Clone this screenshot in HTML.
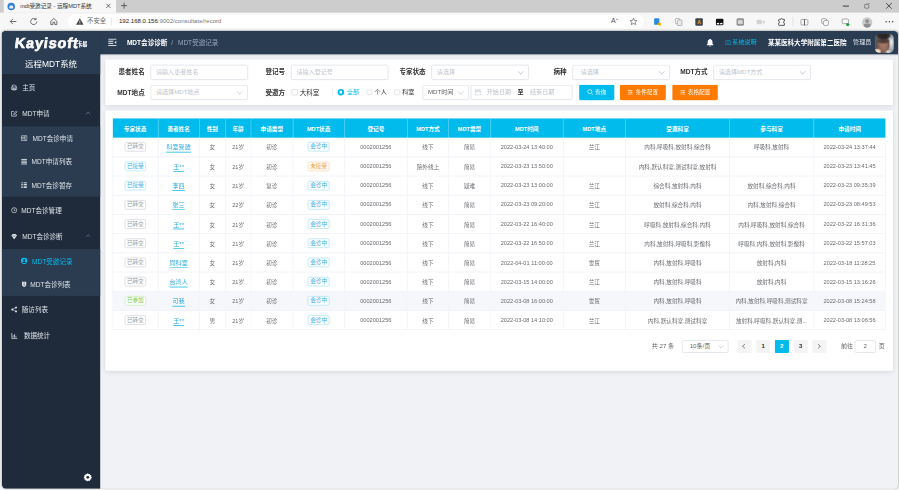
<!DOCTYPE html>
<html lang="zh-CN"><head><meta charset="utf-8"><title>mdt受邀记录 - 远程MDT系统</title>
<style>
*{box-sizing:border-box;margin:0;padding:0}
html,body{width:899px;height:490px;overflow:hidden;background:#f7f7f7}
body{font-family:"Liberation Sans","Noto Sans CJK SC",sans-serif;color:#303133}
#root{position:absolute;left:0;top:0;width:1920px;height:1047px;transform:scale(0.46823) translateZ(0);transform-origin:0 0;overflow:hidden}
.abs{position:absolute}
/* browser chrome */
#tabbar{position:absolute;left:0;top:0;width:1920px;height:27px;background:#cdcdcd;z-index:2}
#tab{position:absolute;left:8px;top:-8px;width:240px;height:35px;background:#f7f7f7;border-radius:8px 8px 0 0}
#tab .fav{position:absolute;left:8px;top:14px;width:16px;height:16px;border-radius:50%;background:#2f7fd6}
#tab .fav i{position:absolute;left:4px;top:5px;width:8px;height:7px;border-radius:4px 4px 1px 1px;background:#e8f1fb}
#tab .ttl{position:absolute;left:35px;top:13px;font-size:12px;color:#333;white-space:nowrap;line-height:18px}
#tab .x{position:absolute;left:216px;top:11px;font-size:18px;line-height:20px;color:#333}
#plus{position:absolute;left:257px;top:1px;font-size:21px;line-height:22px;color:#333}
.wc{position:absolute;top:0;font-size:16px;color:#222;line-height:22px}
#toolbar{position:absolute;left:0;top:26px;width:1920px;height:40px;background:#f7f7f7}
#pill{position:absolute;left:145px;top:5px;width:1230px;height:30px;border-radius:15px;background:#fff}
#pill .t{position:absolute;top:6px;font-size:13px;line-height:18px;white-space:nowrap}
.ti{position:absolute;top:11px;width:18px;height:18px}
/* page */
#page{position:absolute;left:4px;top:66px;width:1913.500px;height:978px;background:#f0f2f5;border-radius:9px;overflow:hidden;box-shadow:0 0 4px rgba(0,0,0,.22)}
#side{position:absolute;left:0;top:0;width:210px;height:978px;background:#1f2b3b}
#logo{position:absolute;left:0;top:0;width:210px;height:92px;background:#2a3c52}
#logo .k{position:absolute;left:23.500px;top:4px;font-size:31px;font-weight:bold;color:#fff;letter-spacing:1.8px;line-height:44px;-webkit-text-stroke:1.3px #fff;white-space:nowrap;transform:skewX(-7deg);transform-origin:0 100%}
#logo .k small{font-size:11px;letter-spacing:-0.5px;-webkit-text-stroke:0.5px #fff;margin-left:-3px;position:relative;top:-3.500px;display:inline-block;transform:skewX(7deg)}
#logo .s{position:absolute;left:0;top:58px;width:210px;text-align:center;font-size:18px;color:#fff;line-height:26px}
.mi{position:absolute;left:0;width:210px;height:56px;line-height:56px;font-size:14px;color:#dde2e9;white-space:nowrap}
.mi .tx{position:absolute;left:43.500px;top:0.500px}
.mi svg{position:absolute;left:19px;top:22px;width:14.500px;height:14px}
.mi .ar{position:absolute;left:181px;top:26px;width:6.500px;height:6.500px;border-left:1.4px solid #74839a;border-top:1.4px solid #74839a;transform:rotate(45deg)}
.sub{position:absolute;left:0;width:210px;background:#2b3c50}
.si{position:absolute;left:0;width:210px;height:50px;line-height:50px;font-size:14px;color:#dde2e9;white-space:nowrap}
.si .tx{position:absolute;left:65.500px;top:1px}
.si svg{position:absolute;left:40px;top:18px;width:15px;height:14px}
.si.act{color:#00bcec}
#hdr{position:absolute;left:0;top:0;width:1914px;height:50px;background:#2a3c52;color:#fff;box-shadow:0 1px 5px rgba(0,21,41,.18)}
#hdr .bc{position:absolute;top:0;line-height:50px;font-size:14px;white-space:nowrap}
/* panels */
.panel{position:absolute;background:#fff;border-radius:2px;box-shadow:0 2px 12px 0 rgba(0,0,0,.1)}
#fpanel{left:221px;top:60.500px;width:1682px;height:97.500px}
.lb{position:absolute;font-size:14px;font-weight:bold;color:#303133;line-height:32px;text-align:right;width:80px;white-space:nowrap}
.ip{position:absolute;height:32.500px;border:2px solid #e2e5eb;border-radius:4px;background:#fff;font-size:13px;color:#c0c4cc;line-height:28px;padding-left:10px;white-space:nowrap}
.ip .dn{position:absolute;right:12px;top:7.500px;width:8.500px;height:8.500px;border-right:1.400px solid #b9bdc6;border-bottom:1.400px solid #b9bdc6;transform:rotate(45deg)}
.btn{position:absolute;height:32.500px;border-radius:3px;color:#fff;font-size:12px;line-height:32px;text-align:center;white-space:nowrap}
.cy{background:#00bbee}
.or{background:#ff7a00}
.rd{position:absolute;width:14px;height:14px;border:2px solid #dfe2e8;border-radius:50%;background:#fff}
.rd.on{border:4.500px solid #00bbee}
.rl{position:absolute;font-size:13px;line-height:32px;color:#303133;white-space:nowrap}
.tpanel{left:221px;top:170px;width:1682px;height:556px}
.tb{position:absolute;left:14.500px;top:17px;border-collapse:collapse;table-layout:fixed;width:1651px;font-size:12px;color:#696b70}
.tb th{height:40.500px;background:#00bbec;color:#fff;font-weight:bold;font-size:12px;text-align:center;border-right:2px solid #43cdf1;border-bottom:0;white-space:nowrap}
.tb th:last-child{border-right:none}
.tb td{height:41.100px;text-align:center;border-right:2px solid #f3f5f9;border-bottom:2px solid #f1f3f8;white-space:nowrap;overflow:hidden}
.tb td:first-child{border-left:2px solid #f3f5f9}
.tb tr.hov td{background:#f5f7fa}
.tag{display:inline-block;height:21px;line-height:17px;padding:0 3px;border:2px solid #dddee2;border-radius:4px;font-size:12px;color:#9a9ca1;background:#fff}

.tag.kb{border-color:#c0e8f9;color:#35aee8;background:#fdfeff}
.tag.ko{border-color:#fbe2c6;color:#f09a40;background:#fffdfa}
.tag.kn{border-color:#d3eec5;color:#78c850;background:#fdfffc}
.lnk{color:#2ba9e0;border-bottom:2px solid #3cc6ea;padding-bottom:1.500px;font-size:13px}
/* pager */
.pg{position:absolute;top:490px;height:28px;line-height:28px;font-size:13px;color:#606266;white-space:nowrap;text-align:center}
.pb{background:#f4f4f5;border-radius:2px;font-weight:bold;color:#303133;width:30px}
.pb.on{background:#00bbec;color:#fff}

</style></head>
<body>
<div id="root">
<!-- browser chrome -->
<div id="tabbar">
  <div id="tab"><span class="fav"><i></i></span><span class="ttl">mdt受邀记录 - 远程MDT系统</span><svg class="abs" style="left:218px;top:15px;width:11px;height:11px" viewBox="0 0 11 11"><path d="M1 1l9 9M10 1l-9 9" stroke="#333" stroke-width="1.500" fill="none"/></svg></div>
  <svg class="abs" style="left:258px;top:5px;width:14px;height:14px" viewBox="0 0 14 14"><path d="M7 0.500v13M0.500 7h13" stroke="#333" stroke-width="1.500" fill="none"/></svg>
  <span class="abs" style="left:1800px;top:12px;width:13px;height:1.500px;background:#333"></span>
  <span class="abs" style="left:1846px;top:8.500px;width:9.500px;height:9.500px;border:1.500px solid #333;border-radius:2px"></span><span class="abs" style="left:1849px;top:6px;width:9.500px;height:9.500px;border-top:1.500px solid #333;border-right:1.500px solid #333;border-radius:0 3px 0 0"></span>
  <svg class="abs" style="left:1891px;top:5px;width:15px;height:15px" viewBox="0 0 15 15"><path d="M1.500 1.500l12 12M13.500 1.500l-12 12" stroke="#222" stroke-width="1.600" fill="none"/></svg>
</div>
<div id="toolbar">
  <svg class="ti" style="left:19px" viewBox="0 0 18 18"><path d="M16 9H3M8.5 3.5L3 9l5.5 5.5" fill="none" stroke="#444" stroke-width="1.6"/></svg>
  <svg class="ti" style="left:63px" viewBox="0 0 18 18"><path d="M15.5 9a6.5 6.5 0 1 1-2.2-4.9M14 1v4h-4" fill="none" stroke="#444" stroke-width="1.6"/></svg>
  <svg class="ti" style="left:106px" viewBox="0 0 18 18"><path d="M2.5 8.5L9 2.5l6.5 6v7h-4.5v-5h-4v5H2.5z" fill="none" stroke="#444" stroke-width="1.6"/></svg>
  <div id="pill">
    <svg class="abs" style="left:16.500px;top:7px;width:17px;height:16px" viewBox="0 0 17 16"><path d="M8.5 1L16.5 15H0.5z" fill="#444"/><path d="M8.5 6v4.5M8.5 12v1.6" stroke="#fff" stroke-width="1.6"/></svg>
    <span class="t" style="left:41px;color:#666;font-size:13.500px">不安全</span>
    <span class="abs" style="left:92px;top:7px;width:1px;height:16px;background:#c8c8c8"></span>
    <span class="t" style="left:109px;color:#222">192.168.0.156<span style="color:#777">:9002/consultate/record</span></span>
    <span class="t" style="left:1160px;color:#555;font-size:15px;top:5px">A<span style="font-size:9px;vertical-align:top;line-height:12px">»</span></span>
    <svg class="abs" style="left:1199px;top:6px;width:18px;height:18px" viewBox="0 0 18 18"><path d="M9 1.8l2.2 4.7 5 .6-3.7 3.5 1 5L9 13.1l-4.5 2.5 1-5L1.800 7.1l5-.6z" fill="none" stroke="#555" stroke-width="1.4" stroke-linejoin="round"/></svg>
  </div>
  <!-- extension icons -->
  <span class="abs" style="left:1397px;top:13px;width:10.500px;height:14px;background:#2d8ae0;border-radius:2px"></span><span class="abs" style="left:1405px;top:21.500px;width:7px;height:7px;background:#f2b200;border-radius:50%"></span>
  <span class="abs" style="left:1442px;top:12.500px;width:10px;height:12px;border:1.6px solid #777;border-radius:2px"></span><span class="abs" style="left:1446px;top:16px;width:10.500px;height:12.500px;border:1.6px solid #777;border-radius:2px;background:#e9e9e9"></span>
  <span class="abs" style="left:1485px;top:12.500px;width:16px;height:16px;background:#3c4150;border-radius:2px;color:#e8b800;font-size:11px;font-weight:bold;line-height:16px;text-align:center">A</span>
  <span class="abs" style="left:1529px;top:14px;width:16px;height:13.500px;background:#111;border-radius:2px"></span><span class="abs" style="left:1531px;top:22.500px;width:5px;height:3px;background:#fff"></span><span class="abs" style="left:1538px;top:22.500px;width:5px;height:3px;background:#fff"></span>
  <span class="abs" style="left:1573px;top:13px;width:16px;height:15.500px;background:#939393;border-radius:3px"></span><span class="abs" style="left:1576px;top:16.500px;width:10px;height:8.500px;background:#d8d8d8"></span>
  <span class="abs" style="left:1616px;top:16px;width:11px;height:10px;background:#d2d2d2;border-radius:2px"></span><span class="abs" style="left:1627px;top:17px;width:0;height:0;border-right:6px solid #d2d2d2;border-top:4px solid transparent;border-bottom:4px solid transparent"></span>
  <svg class="ti" style="left:1660px;top:11.500px;width:19px;height:19px" viewBox="0 0 20 20"><path d="M8 3.500c0-2.400 4-2.400 4 0h4v4.200c-2.600 0-2.600 4.600 0 4.600V17H4.500C3.700 17 3 16.300 3 15.500V12c2.800 0 2.800-4.500 0-4.500V5c0-.8.700-1.500 1.500-1.500z" fill="none" stroke="#444" stroke-width="2" stroke-linejoin="round"/></svg>
  <span class="abs" style="left:1693px;top:10px;width:1px;height:20px;background:#cfcfcf"></span>
  <span class="abs" style="left:1710px;top:14.500px;width:16px;height:13px;border:1.5px solid #555;border-radius:3px"></span><span class="abs" style="left:1717.200px;top:14.500px;width:1.500px;height:13px;background:#555"></span>
  <span class="abs" style="left:1754px;top:12.500px;width:12px;height:12px;border:1.5px solid #555;border-radius:4px"></span><span class="abs" style="left:1758px;top:16.500px;width:12px;height:12px;border:1.5px solid #555;border-radius:4px;background:#f7f7f7"></span>
  <span class="abs" style="left:1798px;top:14px;width:15px;height:11px;border:1.5px solid #555;border-radius:3px"></span><span class="abs" style="left:1807px;top:23px;width:7px;height:7px;background:#21a038;border-radius:50%"></span>
  <span class="abs" style="left:1840.500px;top:10.500px;width:22.500px;height:22.500px;background:#cacaca;border-radius:50%;overflow:hidden"><i class="abs" style="left:7.500px;top:4.500px;width:7.500px;height:7.500px;border-radius:50%;background:#8e8e8e"></i><i class="abs" style="left:3.500px;top:13.500px;width:15.500px;height:13px;border-radius:7px 7px 0 0;background:#8e8e8e"></i></span>
  <span class="abs" style="left:1891px;top:19px;width:3.200px;height:3.200px;border-radius:50%;background:#444"></span><span class="abs" style="left:1898px;top:19px;width:3.200px;height:3.200px;border-radius:50%;background:#444"></span><span class="abs" style="left:1905px;top:19px;width:3.200px;height:3.200px;border-radius:50%;background:#444"></span>
</div>
<!-- page -->
<div id="page">
<div id="hdr"><div class="abs" style="left:210px;top:0;width:1702px;height:50px">
  <svg class="abs" style="left:17px;top:16px;width:18px;height:17px" viewBox="0 0 18 17"><path d="M0 1.500h18M0 6h11M0 10.500h11M0 15.500h18" stroke="#fff" stroke-width="2" fill="none"/><path d="M17.500 5v7l-3.800-3.500z" fill="#fff"/></svg>
  <span class="bc" style="left:57px;font-weight:bold;color:#fff">MDT会诊诊断</span>
  <span class="bc" style="left:152px;color:#97a8be">/</span>
  <span class="bc" style="left:166px;color:#97a8be">MDT受邀记录</span>
  <svg class="abs" style="left:1294px;top:16px;width:17px;height:17.500px" viewBox="0 0 15 16"><path d="M7.500 0.500c.8 0 1.200.6 1.200 1.300C11 2.500 12.200 4.500 12.200 7v3.500l1.800 2v.8H1v-.8l1.800-2V7c0-2.500 1.200-4.500 3.500-5.200 0-.7.400-1.300 1.200-1.300zM5.800 14.200h3.400a1.700 1.700 0 0 1-3.400 0z" fill="#fff"/></svg>
  <svg class="abs" style="left:1335px;top:19.500px;width:11.500px;height:10.500px" viewBox="0 0 14 12" preserveAspectRatio="none"><path d="M.700.700h12.600v10.600H.700zM7 .700v10.600" fill="none" stroke="#00bcec" stroke-width="1.300"/></svg>
  <span class="bc" style="left:1350px;color:#00bcec;font-size:13px">系统说明</span>
  <span class="bc" style="left:1426px;font-weight:bold;color:#fff">某某医科大学附属第二医院</span>
  <span class="bc" style="left:1608px;font-size:13px;color:#dfe6ee">管理员</span>
  <span class="abs" style="left:1654px;top:6px;width:41px;height:40.500px;border-radius:10px;overflow:hidden;background:radial-gradient(ellipse 9px 7px at 6px 38px,#efe9e2 0%,#e3c9a8 60%,rgba(220,160,90,0) 100%),radial-gradient(ellipse 8px 6px at 29px 39px,#e6e6e6 0%,rgba(230,230,230,0) 100%),radial-gradient(ellipse 15px 7px at 19px 15.500px,rgba(45,34,38,.8) 0%,rgba(45,34,38,.55) 60%,rgba(45,34,38,0) 100%),radial-gradient(ellipse 17px 11px at 19px 3px,#282324 0%,#2e2828 65%,rgba(46,40,40,0) 100%),radial-gradient(ellipse 14px 20px at 19px 23px,#a67b6b 0%,#97705f 55%,#7d5c50 80%,rgba(110,85,75,0) 100%),linear-gradient(180deg,rgba(96,102,112,.85) 0%,rgba(96,102,112,.2) 30%,rgba(96,102,112,0) 42%,rgba(96,102,112,.15) 58%,rgba(96,102,112,.7) 100%) 28px 0/13px 100% no-repeat,linear-gradient(90deg,#565860 0%,#5d5754 35%,#6b625e 62%,#b9bec4 72%,#eef1f3 86%,#c2c7cc 100%)"></span>
</div></div>
<div id="side">
  <div id="logo"><span class="k">Kayisoft<small>卡易</small></span><span class="s">远程MDT系统</span></div>
  <div class="mi" style="top:92px"><svg viewBox="0 0 14 14"><path d="M3 6V1.500h6L11 3.500V6M1.500 6h11v5h-11zM4 9h6v3.500H4z" fill="none" stroke="#dfe4ea" stroke-width="1.4"/></svg><span class="tx">主页</span></div>
  <div class="mi" style="top:148px"><svg viewBox="0 0 14 14"><path d="M11.500 7.500v4.500h-10v-10h5M6 8.500l.5-2.500L12 .8 13.500 2.500 8.300 8z" fill="none" stroke="#dfe4ea" stroke-width="1.4"/></svg><span class="tx">MDT申请</span><i class="ar"></i></div>
  <div class="sub" style="top:204px;height:150px">
    <div class="si" style="top:0"><svg viewBox="0 0 14 14"><path d="M1 2h12v10H1zM1 5.500h8M1 8.500h8M9 2v10" fill="none" stroke="#dfe4ea" stroke-width="1.3"/></svg><span class="tx">MDT会诊申请</span></div>
    <div class="si" style="top:50px"><svg viewBox="0 0 14 14"><path d="M1 2.500h12M1 6h12M1 9.500h12M1 12.500h12" fill="none" stroke="#dfe4ea" stroke-width="2"/></svg><span class="tx" style="left:63.500px">MDT申请列表</span></div>
    <div class="si" style="top:100px"><svg viewBox="0 0 14 14"><path d="M1 2.500h3M6 2.500h7M1 6h3M6 6h7M1 9.500h3M6 9.500h7M1 12.500h3M6 12.500h7" fill="none" stroke="#dfe4ea" stroke-width="2"/></svg><span class="tx" style="left:63.500px">MDT会诊暂存</span></div>
  </div>
  <div class="mi" style="top:354px"><svg viewBox="0 0 14 14"><circle cx="7" cy="7" r="5.500" fill="none" stroke="#dfe4ea" stroke-width="1.4"/><path d="M7 3.500V7.500h2.500" fill="none" stroke="#dfe4ea" stroke-width="1.4"/></svg><span class="tx" style="left:41.500px">MDT会诊管理</span></div>
  <div class="mi" style="top:410px"><svg viewBox="0 0 14 14"><path d="M1 5l3-3.500h6L13 5 7 13z" fill="#dfe4ea"/><path d="M4.500 4.500l2.500 3 2.500-3" fill="none" stroke="#1f2b3b" stroke-width="1.2"/></svg><span class="tx">MDT会诊诊断</span><i class="ar"></i></div>
  <div class="sub" style="top:466px;height:100px">
    <div class="si act" style="top:0"><svg viewBox="0 0 14 14"><circle cx="7" cy="7" r="7" fill="#00bcec"/><circle cx="7" cy="5.200" r="2.300" fill="#2b3c50"/><path d="M2.800 11.500a4.300 4.300 0 0 1 8.400 0z" fill="#2b3c50"/></svg><span class="tx" style="left:64.500px">MDT受邀记录</span></div>
    <div class="si" style="top:50px"><svg viewBox="0 0 14 14"><path d="M2.500 1.500h9v6.500c0 2.500-2.500 4-4.500 4.800C5 12 2.500 10.500 2.500 8z" fill="#dfe4ea"/><path d="M7 3v8" stroke="#2b3c50" stroke-width="1.2"/></svg><span class="tx" style="left:60.500px">MDT会诊列表</span></div>
  </div>
  <div class="mi" style="top:566px"><svg viewBox="0 0 14 14"><circle cx="3" cy="7" r="2.200" fill="#dfe4ea"/><circle cx="11" cy="2.800" r="2.200" fill="#dfe4ea"/><circle cx="11" cy="11.200" r="2.200" fill="#dfe4ea"/><path d="M3 7l8-4.200M3 7l8 4.200" stroke="#dfe4ea" stroke-width="1.300"/></svg><span class="tx" style="left:42.500px">随访列表</span></div>
  <div class="mi" style="top:622px"><svg viewBox="0 0 14 14" style="width:16px;height:14px;top:22px"><path d="M1.200 1v12h12M4 11V6M7 11V3.500M10 11V7" fill="none" stroke="#dfe4ea" stroke-width="1.500"/></svg><span class="tx" style="left:47px">数据统计</span></div>
  <svg class="abs" style="left:173.500px;top:944px;width:19px;height:19px" viewBox="0 0 16 16"><path d="M8 0l1.200 2.200 2.400-.8.300 2.500 2.500.3-.8 2.400L16 8l-2.200 1.200.8 2.400-2.500.3-.3 2.500-2.400-.8L8 16l-1.200-2.200-2.400.8-.3-2.500-2.500-.3.800-2.400L0 8l2.200-1.200-.8-2.400 2.500-.3.300-2.500 2.400.8z" fill="#fff"/><circle cx="8" cy="8" r="2.600" fill="#1f2b3b"/></svg>
</div>
<!-- filter panel -->
<div class="panel" id="fpanel">
  <span class="lb" style="left:4px;top:11.500px">患者姓名</span><span class="ip" style="left:96px;top:11.500px;width:209px">请输入患者姓名</span>
  <span class="lb" style="left:304px;top:11.500px">登记号</span><span class="ip" style="left:396px;top:11.500px;width:209px">请输入登记号</span>
  <span class="lb" style="left:604px;top:11.500px">专家状态</span><span class="ip" style="left:696px;top:11.500px;width:209px">请选择<i class="dn"></i></span>
  <span class="lb" style="left:905px;top:11.500px">病种</span><span class="ip" style="left:997px;top:11.500px;width:209px;padding-left:16px">请选择<i class="dn"></i></span>
  <span class="lb" style="left:1206px;top:11.500px">MDT方式</span><span class="ip" style="left:1298px;top:11.500px;width:209px">请选择MDT方式<i class="dn"></i></span>

  <span class="lb" style="left:4px;top:54.500px">MDT地点</span><span class="ip" style="left:96px;top:54.500px;width:209px">请选择MDT地点<i class="dn"></i></span>
  <span class="lb" style="left:304px;top:54.500px">受邀方</span>
  <span class="abs" style="left:397px;top:63.500px;width:14px;height:14px;border:2px solid #dfe2e8;border-radius:2px;background:#fff"></span>
  <span class="rl" style="left:415px;top:54.500px;font-size:14px">大科室</span>
  <span class="abs" style="left:485px;top:62.500px;width:1px;height:16px;background:#dcdfe6"></span>
  <span class="rd on" style="left:495.500px;top:63.500px"></span><span class="rl" style="left:516px;top:54.500px;color:#00bbee">全部</span>
  <span class="rd" style="left:556.500px;top:63.500px"></span><span class="rl" style="left:575px;top:54.500px">个人</span>
  <span class="rd" style="left:615.500px;top:63.500px"></span><span class="rl" style="left:634px;top:54.500px">科室</span>
  <span class="ip" style="left:677px;top:54.500px;width:100px;color:#606266;padding-left:10px">MDT时间<i class="dn"></i></span>
  <span class="ip" style="left:780px;top:54.500px;width:218px;padding-left:0">
    <svg class="abs" style="left:7px;top:7px;width:14px;height:14px" viewBox="0 0 12 12"><path d="M.700 2h10.600v9.300H.700zM.700 4.800h10.600M3.500.500v2.500M8.500.500v2.500" fill="none" stroke="#c0c4cc" stroke-width="1.100"/></svg>
    <span class="abs" style="left:32.500px">开始日期</span><span class="abs" style="left:98px;color:#303133;font-weight:bold">至</span><span class="abs" style="left:125px">结束日期</span>
  </span>
  <span class="btn cy" style="left:1012px;top:54.500px;width:75px"><svg style="width:13px;height:13px;vertical-align:-2px;margin-right:3px" viewBox="0 0 11 11"><circle cx="4.700" cy="4.700" r="3.700" fill="none" stroke="#fff" stroke-width="1.200"/><path d="M7.500 7.500l3 3" stroke="#fff" stroke-width="1.200"/></svg>查询</span>
  <span class="btn or" style="left:1099px;top:54.500px;width:98px"><svg style="width:12px;height:12px;vertical-align:-1.500px;margin-right:5px" viewBox="0 0 11 11"><path d="M1 2h9M1 5.500h9M1 9h9" stroke="#fff" stroke-width="1.200"/><path d="M3.500.700v2.600M7.500 4.200v2.600" stroke="#fff" stroke-width="1.200"/></svg>条件配置</span>
  <span class="btn or" style="left:1211px;top:54.500px;width:97px"><svg style="width:12px;height:12px;vertical-align:-1.500px;margin-right:5px" viewBox="0 0 11 11"><path d="M1 2h9M1 5.500h9M1 9h9" stroke="#fff" stroke-width="1.200"/><path d="M3.500.700v2.600M7.500 4.200v2.600" stroke="#fff" stroke-width="1.200"/></svg>表格配置</span>
</div>
<div class="panel tpanel">
<table class="tb"><colgroup><col style="width:97px"><col style="width:88px"><col style="width:56px"><col style="width:54px"><col style="width:90px"><col style="width:110px"><col style="width:134.5px"><col style="width:88px"><col style="width:89.5px"><col style="width:155px"><col style="width:133.5px"><col style="width:222px"><col style="width:179.5px"><col style="width:153.5px"></colgroup>
<thead><tr><th>专家状态</th><th>患者姓名</th><th>性别</th><th>年龄</th><th>申请类型</th><th>MDT状态</th><th>登记号</th><th>MDT方式</th><th>MDT类型</th><th>MDT时间</th><th>MDT地点</th><th>受邀科室</th><th>参与科室</th><th>申请时间</th></tr></thead>
<tbody>
<tr><td><span class="tag kg">已转交</span></td><td><span class="lnk">科室受邀</span></td><td>女</td><td>21岁</td><td>初诊</td><td><span class="tag kb">会诊中</span></td><td>0002001256</td><td>线下</td><td>简易</td><td>2022-03-24 13:40:00</td><td>兰江</td><td>内科,呼吸科,放射科,综合科</td><td>呼吸科,放射科</td><td>2022-03-24 13:37:44</td></tr>
<tr><td><span class="tag kb">已接受</span></td><td><span class="lnk">王**</span></td><td>女</td><td>21岁</td><td>初诊</td><td><span class="tag ko">未接受</span></td><td>0002001256</td><td>院外线上</td><td>简易</td><td>2022-03-23 13:50:00</td><td></td><td>内科,默认科室,测试科室,放射科</td><td></td><td>2022-03-23 13:41:45</td></tr>
<tr><td><span class="tag kb">已接受</span></td><td><span class="lnk">李四</span></td><td>女</td><td>21岁</td><td>复诊</td><td><span class="tag kb">会诊中</span></td><td>0002001256</td><td>线下</td><td>疑难</td><td>2022-03-23 13:00:00</td><td>兰江</td><td>综合科,放射科,内科</td><td>放射科,综合科,内科</td><td>2022-03-23 09:35:39</td></tr>
<tr><td><span class="tag kg">已转交</span></td><td><span class="lnk">张三</span></td><td>女</td><td>22岁</td><td>初诊</td><td><span class="tag kb">会诊中</span></td><td>0002001256</td><td>线下</td><td>简易</td><td>2022-03-23 09:20:00</td><td>兰江</td><td>放射科,综合科,内科</td><td>内科,放射科,综合科</td><td>2022-03-23 08:49:53</td></tr>
<tr><td><span class="tag kg">已转交</span></td><td><span class="lnk">王**</span></td><td>女</td><td>21岁</td><td>初诊</td><td><span class="tag kb">会诊中</span></td><td>0002001256</td><td>线下</td><td>简易</td><td>2022-03-22 16:40:00</td><td>兰江</td><td>呼吸科,放射科,综合科,内科</td><td>内科,呼吸科,放射科,综合科</td><td>2022-03-22 16:31:36</td></tr>
<tr><td><span class="tag kg">已转交</span></td><td><span class="lnk">王**</span></td><td>女</td><td>21岁</td><td>初诊</td><td><span class="tag kb">会诊中</span></td><td>0002001256</td><td>线下</td><td>简易</td><td>2022-03-22 16:50:00</td><td>兰江</td><td>内科,放射科,呼吸科,影像科</td><td>呼吸科,内科,放射科,影像科</td><td>2022-03-22 15:57:03</td></tr>
<tr><td><span class="tag kg">已转交</span></td><td><span class="lnk">同科室</span></td><td>女</td><td>21岁</td><td>初诊</td><td><span class="tag kb">会诊中</span></td><td>0002001256</td><td>线下</td><td>简易</td><td>2022-04-01 11:00:00</td><td>世贸</td><td>内科,放射科,呼吸科</td><td>放射科,内科</td><td>2022-03-18 11:28:25</td></tr>
<tr><td><span class="tag kg">已转交</span></td><td><span class="lnk">台湾人</span></td><td>女</td><td>21岁</td><td>初诊</td><td><span class="tag kb">会诊中</span></td><td>0002001256</td><td>线下</td><td>简易</td><td>2022-03-15 14:00:00</td><td>兰江</td><td>内科,放射科,呼吸科</td><td>放射科,内科</td><td>2022-03-15 13:16:26</td></tr>
<tr class="hov"><td><span class="tag kn">已参加</span></td><td><span class="lnk">可我</span></td><td>女</td><td>21岁</td><td>初诊</td><td><span class="tag kb">会诊中</span></td><td>0002001256</td><td>线下</td><td>简易</td><td>2022-03-08 16:00:00</td><td>世贸</td><td>内科,放射科,呼吸科</td><td>内科,放射科,呼吸科,测试科室</td><td>2022-03-08 15:24:58</td></tr>
<tr><td><span class="tag kg">已转交</span></td><td><span class="lnk">王**</span></td><td>男</td><td>21岁</td><td>初诊</td><td><span class="tag kb">会诊中</span></td><td>0002001256</td><td>线下</td><td>简易</td><td>2022-03-08 14:10:00</td><td>兰江</td><td>内科,默认科室,测试科室</td><td>放射科,呼吸科,默认科室,测...</td><td>2022-03-08 13:06:56</td></tr>
</tbody></table>
<span class="pg" style="left:1167px;font-weight:normal">共 27 条</span>
<span class="pg ip" style="left:1231px;width:100px;height:28px;line-height:24px;color:#606266;font-size:13px;text-align:center;padding:0 22px 0 0">10条/页<i class="dn" style="top:6px;right:11px;width:7.500px;height:7.500px"></i></span>
<span class="pg pb" style="left:1350px"><i class="abs" style="left:12px;top:10px;width:7px;height:7px;border-left:1.5px solid #303133;border-bottom:1.5px solid #303133;transform:rotate(45deg)"></i></span>
<span class="pg pb" style="left:1390px">1</span>
<span class="pg pb on" style="left:1430px">2</span>
<span class="pg pb" style="left:1470px">3</span>
<span class="pg pb" style="left:1510px"><i class="abs" style="left:9px;top:10px;width:7px;height:7px;border-right:1.5px solid #303133;border-top:1.5px solid #303133;transform:rotate(45deg)"></i></span>
<span class="pg" style="left:1571px">前往</span>
<span class="pg ip" style="left:1600px;width:46px;height:28px;line-height:24px;color:#606266;font-size:13px;text-align:center;padding:0">2</span>
<span class="pg" style="left:1652px">页</span>
</div>
</div>
</div>
</body></html>
